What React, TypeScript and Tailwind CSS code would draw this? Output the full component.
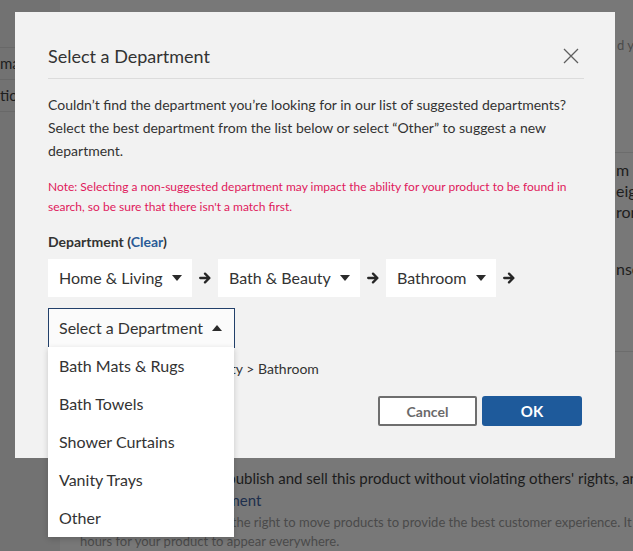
import React from 'react';

const departments = ['Bath Mats & Rugs', 'Bath Towels', 'Shower Curtains', 'Vanity Trays', 'Other'];

const Caret = ({ up = false }: { up?: boolean }) => (
    <svg width="10" height="6" viewBox="0 0 10 6" className="shrink-0">
        <path d={up ? 'M0 6h10L5 0z' : 'M0 0h10L5 6z'} fill="#2b2b2b" />
    </svg>
);

const Arrow = () => (
    <svg width="12" height="12" viewBox="0 0 12 12" className="shrink-0">
        <path
            d="M1.2 6h9M6 1.6 10.4 6 6 10.4"
            fill="none"
            stroke="#262626"
            strokeWidth="2.3"
            strokeLinecap="round"
            strokeLinejoin="round"
        />
    </svg>
);

const Chip = ({ label, width }: { label: string; width: string }) => (
    <div className={`flex h-[38px] items-center justify-between bg-white pl-[11px] pr-[10px] text-[16px] text-[#333] ${width}`}>
        <span>{label}</span>
        <Caret />
    </div>
);

export default function App() {
    return (
        <div className="relative flex h-[551px] w-[633px] overflow-hidden bg-[#787878] font-['Lato',sans-serif]">
            {/* sidebar behind the overlay */}
            <div className="flex w-[60px] shrink-0 flex-col overflow-hidden bg-[#727272] pt-[47px] text-[15px] text-[#1e1e1e]">
                <div className="flex h-[33px] items-center border-y border-[#686868] whitespace-nowrap">ma</div>
                <div className="flex h-[32px] items-center border-b border-[#686868] whitespace-nowrap">tion</div>
            </div>

            {/* page content behind the overlay */}
            <div className="flex min-w-0 flex-1 flex-col whitespace-nowrap">
                <div className="h-[152px] pt-[36px] pl-[557px] text-[13px] text-[#4a4a4a]">d your</div>
                <div className="flex h-[201px] flex-col border-y border-[#6c6c6c] pt-[6px] pl-[556px] text-[16px] leading-[21px] text-[#1e1e1e]">
                    <div>m</div>
                    <div>eig</div>
                    <div>ron</div>
                    <div className="mt-[36px]">nse</div>
                </div>
                <div className="pt-[115px] pl-[20px]">
                    <label className="flex items-center gap-[7px] text-[15px] leading-[22px] text-[#1c1c1c]">
                        <span className="h-[13px] w-[13px] shrink-0 rounded-[2px] border border-[#444] bg-[#7a7a7a]" />
                        I confirm that I can publish and sell this product without violating others' rights, and I agree
                    </label>
                    <div className="text-[15px] leading-[22px] text-[#1d2f4d]">Read the Listing Agreement</div>
                    <div className="mt-[2px] text-[13px] leading-[19px] text-[#4a4a4a]">
                        Please note that we retain the right to move products to provide the best customer experience. It may take up to 24
                        <br />
                        hours for your product to appear everywhere.
                    </div>
                </div>
            </div>

            {/* department dialog */}
            <div className="absolute left-[15px] top-[12px] w-[600px] bg-[#f2f2f2] pt-[32px] pb-[32px] pl-[33px] pr-[31px] text-[#333]">
                <div className="flex items-center justify-between border-b border-[#dcdcdc] pb-[10px]">
                    <h2 className="text-[18px] leading-[24px]">Select a Department</h2>
                    <svg width="16" height="16" viewBox="0 0 16 16" className="mr-[5px]">
                        <path d="M1 1l14 14M15 1 1 15" stroke="#5f5f5f" strokeWidth="1.3" />
                    </svg>
                </div>

                <p className="mt-[14px] whitespace-nowrap text-[14px] leading-[23px]">
                    Couldn’t find the department you’re looking for in our list of suggested departments?
                    <br />
                    Select the best department from the list below or select “Other” to suggest a new
                    <br />
                    department.
                </p>

                <p className="mt-[15px] whitespace-nowrap text-[12px] leading-[20px] text-[#e0195c]">
                    Note: Selecting a non-suggested department may impact the ability for your product to be found in
                    <br />
                    search, so be sure that there isn't a match first.
                </p>

                <div className="mt-[16px] text-[14px] font-bold leading-[18px]">
                    Department (<span className="text-[#2a5c97]">Clear</span>)
                </div>

                <div className="mt-[8px] flex items-center gap-[7px]">
                    <Chip label="Home & Living" width="w-[144px]" />
                    <Arrow />
                    <Chip label="Bath & Beauty" width="w-[142px]" />
                    <Arrow />
                    <Chip label="Bathroom" width="w-[110px]" />
                    <Arrow />
                </div>

                <div className="relative mt-[11px] w-[187px]">
                    <div className="flex h-[40px] items-center justify-between border border-[#22406a] bg-[#fbfbfb] pl-[10px] pr-[12px] text-[16px]">
                        <span>Select a Department</span>
                        <Caret up />
                    </div>
                    <ul className="absolute left-0 top-[39px] z-10 w-[186px] bg-white shadow-[0_2px_6px_rgba(0,0,0,0.18)]">
                        {departments.map(d => (
                            <li key={d} className="flex h-[38px] items-center pl-[11px] text-[16px] text-[#333]">
                                {d}
                            </li>
                        ))}
                    </ul>
                </div>

                <div className="mt-[11px] text-[14px] leading-[20px]">Home & Living &gt; Bath & Beauty &gt; Bathroom</div>

                <div className="mt-[17px] mr-[2px] flex justify-end gap-[5px]">
                    <button className="h-[30px] w-[99px] rounded-[2px] border-2 border-[#6e6e6e] bg-white text-[14px] font-bold text-[#6a6a6a]">
                        Cancel
                    </button>
                    <button className="h-[30px] w-[100px] rounded-[3px] bg-[#1e5a9b] text-[15px] font-bold text-white">OK</button>
                </div>
            </div>
        </div>
    );
}
